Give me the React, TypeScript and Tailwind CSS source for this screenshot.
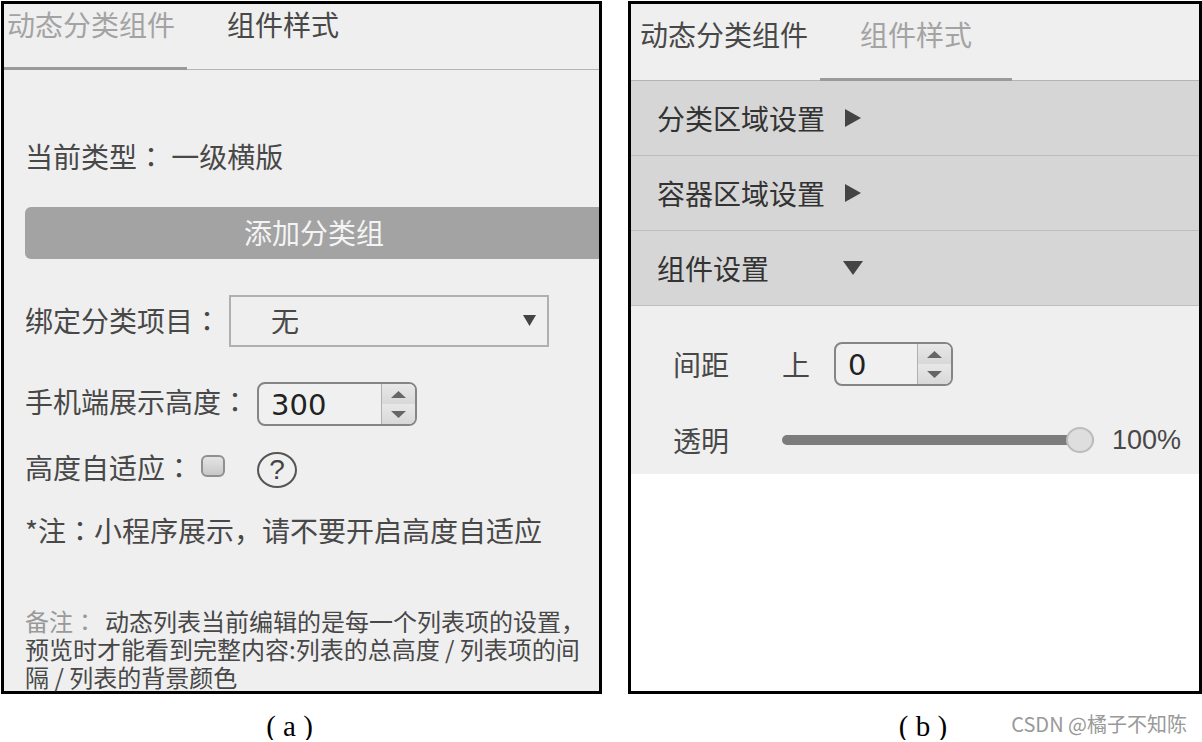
import { useId, useState } from 'react';

const TABS = ['动态分类组件', '组件样式'];

function Colon() {
  return <span className="font-['Noto_Sans_CJK_TC',sans-serif]">：</span>;
}

function Triangle({ dir, className }: { dir: 'up' | 'down' | 'right'; className: string }) {
  const points = { up: '0,10 5,0 10,10', down: '0,0 10,0 5,10', right: '0,0 10,5 0,10' }[dir];
  return (
    <svg viewBox="0 0 10 10" preserveAspectRatio="none" aria-hidden="true" className={className}>
      <polygon points={points} fill="currentColor" />
    </svg>
  );
}

function Stepper({ id, initial, className }: { id: string; initial: number; className: string }) {
  const [value, setValue] = useState(initial);
  return (
    <div className={`flex h-11 overflow-hidden rounded-lg border-2 border-[#858585] bg-[#f0f0f0] ${className}`}>
      <input
        id={id}
        type="number"
        value={value}
        onChange={(e) => setValue(Number(e.target.value))}
        className="w-0 min-w-0 flex-1 bg-transparent pt-0.5 pl-3 font-['DejaVu_Sans',sans-serif] text-[29px] leading-9 text-[#222] outline-none [appearance:textfield] [&::-webkit-inner-spin-button]:appearance-none"
      />
      <div className="flex w-[34px] flex-col border-l border-[#b0b0b0] bg-[#dcdcdc] text-[#666]">
        <button
          type="button"
          aria-label="增加"
          onClick={() => setValue(value + 1)}
          className="flex flex-1 items-center justify-center bg-gradient-to-b from-[#e8e8e8] to-[#d8d8d8]"
        >
          <Triangle dir="up" className="h-[7px] w-[15px]" />
        </button>
        <button
          type="button"
          aria-label="减少"
          onClick={() => setValue(value - 1)}
          className="flex flex-1 items-center justify-center bg-gradient-to-b from-[#e8e8e8] to-[#d8d8d8]"
        >
          <Triangle dir="down" className="h-[7px] w-[15px]" />
        </button>
      </div>
    </div>
  );
}

function ContentPanel() {
  const id = useId();
  return (
    <section className="flex-1 border-3 border-black bg-[#efefef]">
      <nav className="flex border-b border-[#b4b4b4]">
        <button type="button" className="-mb-px border-b-3 border-[#9a9a9a] pt-1.5 pr-3 pb-[29px] pl-[3px] text-[#a3a3a3]">
          {TABS[0]}
        </button>
        <button type="button" className="-mb-px pt-1.5 pb-8 pl-10">
          {TABS[1]}
        </button>
      </nav>

      <div className="pl-[21px]">
        <p className="mt-[72px]">
          当前类型
          <Colon /> 一级横版
        </p>

        <button type="button" className="mt-[37px] block h-[52px] w-full rounded-l-md bg-[#a3a3a3] pb-0.5 pl-1 text-[#f4f4f4]">
          添加分类组
        </button>

        <div className="mt-9 flex items-center">
          <label htmlFor={`${id}-project`} className="w-[204px] shrink-0 pb-0.5">
            绑定分类项目
            <Colon />
          </label>
          <div className="relative mr-[50px] flex-1">
            <select
              id={`${id}-project`}
              className="block h-[52px] w-full appearance-none border-2 border-[#b0b0b0] bg-transparent pb-0.5 pl-10 outline-none"
            >
              <option>无</option>
            </select>
            <Triangle dir="down" className="pointer-events-none absolute top-5 right-[13px] h-[11px] w-[13px] text-[#444]" />
          </div>
        </div>

        <div className="mt-[35px] flex items-center">
          <label htmlFor={`${id}-height`} className="w-[232px] shrink-0 pb-1.5">
            手机端展示高度
            <Colon />
          </label>
          <Stepper id={`${id}-height`} initial={300} className="w-40" />
        </div>

        <div className="mt-[26px] flex h-9 items-center">
          <label htmlFor={`${id}-auto`} className="w-44 shrink-0 pb-1.5">
            高度自适应
            <Colon />
          </label>
          <input
            id={`${id}-auto`}
            type="checkbox"
            className="mb-2 h-[22px] w-6 appearance-none rounded-md border-2 border-[#8f8f8f] bg-gradient-to-b from-[#e4e4e4] to-[#c8c8c8] checked:bg-[#888]"
          />
          <button
            type="button"
            aria-label="帮助"
            className="ml-8 flex h-9 w-10 items-center justify-center rounded-[50%] border-2 border-[#555] font-['Liberation_Sans',sans-serif] text-[28px] leading-7 text-[#444]"
          >
            ?
          </button>
        </div>

        <p className="mt-7">
          *注
          <Colon />
          小程序展示，请不要开启高度自适应
        </p>

        <p className="mt-[63px] pr-2 text-2xl leading-7">
          <span className="mr-2 text-[#999]">
            备注
            <Colon />
          </span>
          动态列表当前编辑的是每一个列表项的设置，预览时才能看到完整内容:列表的总高度 / 列表项的间隔 / 列表的背景颜色
        </p>
      </div>
    </section>
  );
}

function StylePanel() {
  const id = useId();
  const [open, setOpen] = useState('组件设置');
  const [opacity, setOpacity] = useState(100);
  return (
    <section className="flex-1 border-3 border-black bg-white">
      <nav className="flex border-b border-[#b4b4b4] bg-[#efefef]">
        <button type="button" className="-mb-px pt-4 pr-3 pb-[33px] pl-[9px]">
          {TABS[0]}
        </button>
        <button type="button" className="-mb-px border-b-3 border-[#9a9a9a] px-10 pt-4 pb-[30px] text-[#a3a3a3]">
          {TABS[1]}
        </button>
      </nav>

      {['分类区域设置', '容器区域设置', '组件设置'].map((name) => (
        <button
          key={name}
          type="button"
          aria-expanded={open === name}
          onClick={() => setOpen(name)}
          className="flex h-[75px] w-full items-center border-b border-[#bdbdbd] bg-[#d6d6d6] pl-[26px] text-left text-[#333]"
        >
          <span className="w-[186px]">{name}</span>
          <span className="flex w-5 justify-center text-[#444]">
            {open === name ? (
              <Triangle dir="down" className="h-[14px] w-5" />
            ) : (
              <Triangle dir="right" className="h-[18px] w-4" />
            )}
          </span>
        </button>
      ))}

      <div className="bg-[#efefef] pt-9 pr-[18px] pb-5 pl-[42px]">
        <div className="flex items-center">
          <span className="w-[109px]">间距</span>
          <label htmlFor={`${id}-top`} className="w-[52px]">
            上
          </label>
          <Stepper id={`${id}-top`} initial={0} className="w-[119px]" />
        </div>
        <div className="mt-10 flex items-center">
          <label htmlFor={`${id}-opacity`} className="w-[109px] shrink-0">
            透明
          </label>
          <input
            id={`${id}-opacity`}
            type="range"
            min={0}
            max={100}
            value={opacity}
            onChange={(e) => setOpacity(Number(e.target.value))}
            className="h-[26px] min-w-0 flex-1 appearance-none bg-transparent [&::-webkit-slider-runnable-track]:h-[10px] [&::-webkit-slider-runnable-track]:rounded-full [&::-webkit-slider-runnable-track]:bg-[#7c7c7c] [&::-webkit-slider-thumb]:-mt-2 [&::-webkit-slider-thumb]:h-[26px] [&::-webkit-slider-thumb]:w-7 [&::-webkit-slider-thumb]:appearance-none [&::-webkit-slider-thumb]:rounded-[50%] [&::-webkit-slider-thumb]:border-2 [&::-webkit-slider-thumb]:border-[#bcbcbc] [&::-webkit-slider-thumb]:bg-[#dedede]"
          />
          <output className="ml-[18px] font-['Liberation_Sans',sans-serif] text-[27px]">{opacity}%</output>
        </div>
      </div>
    </section>
  );
}

export default function App() {
  return (
    <main className="relative grid grid-cols-[601fr_574fr] gap-x-[26px] bg-white pt-px pl-px font-['Noto_Sans_CJK_SC',sans-serif] text-[28px] leading-7 text-[#484848]">
      <figure className="flex flex-col">
        <ContentPanel />
        <figcaption className="mt-[18px] pr-6 text-center font-['Liberation_Serif',serif] text-[29px] leading-7 text-black">
          ( a )
        </figcaption>
      </figure>
      <figure className="flex flex-col">
        <StylePanel />
        <figcaption className="mt-[18px] pl-4 text-center font-['Liberation_Serif',serif] text-[29px] leading-7 text-black">
          ( b )
        </figcaption>
      </figure>
      <p className="absolute right-[15px] bottom-0.5 text-xl leading-7 text-[#999]">CSDN @橘子不知陈</p>
    </main>
  );
}
